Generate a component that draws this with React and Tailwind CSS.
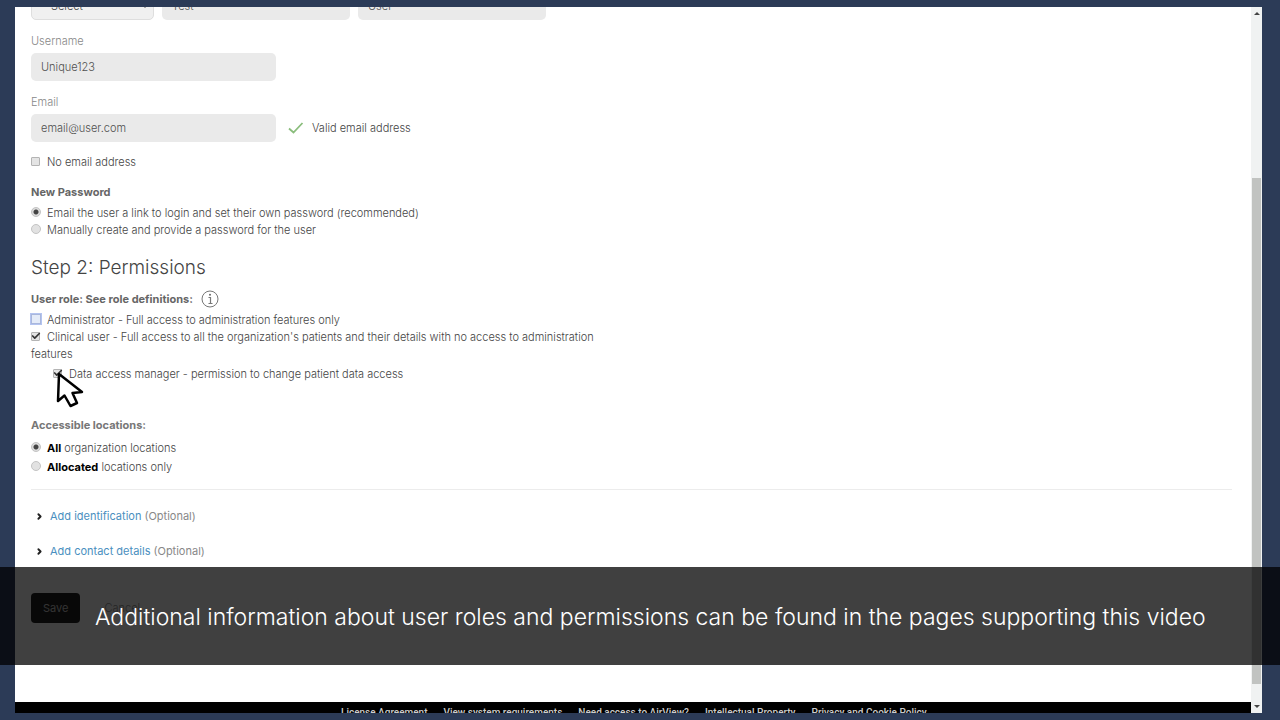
import { useState } from 'react';
import { Check, ChevronRight } from 'lucide-react';

const footerLinks = [
  'License Agreement',
  'View system requirements',
  'Need access to AirView?',
  'Intellectual Property',
  'Privacy and Cookie Policy',
];

const inputClass = 'h-7 rounded-[5px] bg-[#eaeaea] px-[10px] text-[11px] text-[#505050] outline-none';

function Tick({ focused, ...props }) {
  return (
    <span className={`relative inline-block ${focused ? 'mr-[6px] size-[10px]' : 'mr-[7px] size-[9px]'}`}>
      <input
        type="checkbox"
        className={
          focused
            ? 'block size-full appearance-none border border-[#a9b7dc] bg-[#e4ebf8] outline outline-[#b4c4f0]'
            : 'block size-full appearance-none rounded-[1px] border border-[#b4b4b4] bg-[#e4e4e4]'
        }
        {...props}
      />
      {props.checked && (
        <Check className="pointer-events-none absolute -top-px left-0 size-[10px] text-[#333]" strokeWidth={4} />
      )}
    </span>
  );
}

function Radio(props) {
  return (
    <input
      type="radio"
      className="mr-[6px] inline-block size-[10px] appearance-none rounded-full border border-[#c4c4c4] bg-[#e2e2e2] checked:bg-[radial-gradient(circle,#444_0_2px,#dcdcdc_3px)]"
      {...props}
    />
  );
}

function ExpandRow({ text }) {
  return (
    <div className="flex items-center pl-1">
      <ChevronRight className="mr-[6px] size-[9px] text-[#222]" strokeWidth={5} />
      <a href="#" className="mr-[3px] font-normal text-[#4a8fc0]">{text}</a>
      <span className="font-normal text-[#888]">(Optional)</span>
    </div>
  );
}

function Scrollbar() {
  return (
    <div className="flex w-[11px] shrink-0 flex-col items-center bg-[#f0f2f2]">
      <svg className="h-[13px] w-[6px]" viewBox="0 0 6 13"><path d="M0 8 L3 5 L6 8Z" fill="#444" /></svg>
      <div className="grow-[158]" />
      <div className="w-[9px] grow-[506] bg-[#c1c3c1]" />
      <div className="grow-[16]" />
      <svg className="h-[13px] w-[6px]" viewBox="0 0 6 13"><path d="M0 5 L3 8 L6 5Z" fill="#444" /></svg>
    </div>
  );
}

export default function App() {
  const [username, setUsername] = useState('Unique123');
  const [email, setEmail] = useState('email@user.com');
  const [noEmail, setNoEmail] = useState(false);
  const [passwordMode, setPasswordMode] = useState('link');
  const [roles, setRoles] = useState({ admin: false, clinical: true, dataAccess: true });
  const [locations, setLocations] = useState('all');

  const toggleRole = (key) => setRoles({ ...roles, [key]: !roles[key] });

  return (
    <div className="relative flex h-screen overflow-hidden bg-[#2c3b57] py-[7px] pr-[18px] pl-[15px] font-['Inter',sans-serif] text-[11px] leading-[17px] font-light text-[#444]">
      <div className="flex min-w-0 flex-1 flex-col overflow-hidden bg-white">
        <form className="-mt-[15px] flex-1 px-4" onSubmit={(e) => e.preventDefault()}>
          <div className="flex gap-2">
            <div className="relative">
              <select
                aria-label="Title"
                className="h-7 w-[123px] appearance-none rounded-[5px] border border-[#dedede] bg-[#f0f0f0] pl-[19px] outline-none"
              >
                <option>Select</option>
              </select>
              <svg className="pointer-events-none absolute top-3 right-[6px] h-1 w-[6px]" viewBox="0 0 6 4"><path d="M0 0H6L3 4Z" fill="#333" /></svg>
            </div>
            <input aria-label="First name" className={`${inputClass} w-[188px]`} defaultValue="Test" />
            <input aria-label="Last name" className={`${inputClass} w-[188px]`} defaultValue="User" />
          </div>

          <label htmlFor="username" className="mt-[13px] mb-1 block leading-4 text-[#888]">Username</label>
          <input id="username" className={`${inputClass} block w-[245px]`} value={username} onChange={(e) => setUsername(e.target.value)} />

          <label htmlFor="email" className="mt-[13px] mb-1 block leading-4 text-[#888]">Email</label>
          <div className="flex items-center">
            <input id="email" className={`${inputClass} w-[245px]`} value={email} onChange={(e) => setEmail(e.target.value)} />
            <svg className="mr-2 ml-3 h-3 w-4" viewBox="0 0 16 12" fill="none" stroke="#8abd7c" strokeWidth="1.8">
              <path d="M1 6.5 L5.5 10.5 L14.5 1" />
            </svg>
            <span>Valid email address</span>
          </div>

          <label className="mt-3 block">
            <Tick checked={noEmail} onChange={() => setNoEmail(!noEmail)} />
            No email address
          </label>

          <fieldset className="mt-[13px]">
            <legend className="mb-1 font-bold text-[#666]">New Password</legend>
            <label className="block">
              <Radio name="password" checked={passwordMode === 'link'} onChange={() => setPasswordMode('link')} />
              Email the user a link to login and set their own password (recommended)
            </label>
            <label className="block">
              <Radio name="password" checked={passwordMode === 'manual'} onChange={() => setPasswordMode('manual')} />
              Manually create and provide a password for the user
            </label>
          </fieldset>

          <h2 className="mt-[17px] text-[19px] leading-6">Step 2: Permissions</h2>

          <div className="mt-[10px] mb-1 flex items-center gap-2">
            <span className="font-bold text-[#666]">User role: See role definitions:</span>
            <button type="button" aria-label="Role definitions">
              <svg className="block size-[18px]" viewBox="0 0 18 18" fill="none" stroke="#777">
                <circle cx="9" cy="9" r="8" />
                <path d="M7.5 7.5H9.5V13M7.5 13.5H11.5" strokeWidth="1.2" />
                <circle cx="9" cy="4.8" r="1" fill="#666" stroke="none" />
              </svg>
            </button>
          </div>
          <div className="max-w-[580px]">
            <label className="block">
              <Tick focused checked={roles.admin} onChange={() => toggleRole('admin')} />
              Administrator - Full access to administration features only
            </label>
            <label className="block">
              <Tick checked={roles.clinical} onChange={() => toggleRole('clinical')} />
              Clinical user - Full access to all the organization's patients and their details with no access to administration features
            </label>
            <div className="relative mt-[3px] pl-[22px]">
              <label className="block">
                <Tick checked={roles.dataAccess} onChange={() => toggleRole('dataAccess')} />
                Data access manager - permission to change patient data access
              </label>
              <svg className="pointer-events-none absolute top-[6px] left-[25px] h-9 w-7" viewBox="0 0 28 36">
                <path d="M3 2 L2 29 L8.5 23.5 L14.5 34 L21 31 L16.5 21 L26 20Z" fill="#fff" stroke="#000" strokeWidth="2.5" strokeLinejoin="round" />
              </svg>
            </div>
          </div>

          <fieldset className="mt-[34px]">
            <legend className="mb-[6px] font-bold text-[#777]">Accessible locations:</legend>
            <label className="mb-[2px] block">
              <Radio name="locations" checked={locations === 'all'} onChange={() => setLocations('all')} />
              <b className="font-bold text-black">All</b> organization locations
            </label>
            <label className="block">
              <Radio name="locations" checked={locations === 'allocated'} onChange={() => setLocations('allocated')} />
              <b className="font-bold text-black">Allocated</b> locations only
            </label>
          </fieldset>

          <hr className="mt-[13px] mr-[3px] border-[#ececec]" />

          <div className="mt-[18px] flex flex-col gap-[18px]">
            <ExpandRow text="Add identification" />
            <ExpandRow text="Add contact details" />
          </div>

          <div className="mt-[33px] flex items-center gap-6">
            <button type="submit" className="h-[30px] rounded-[4px] bg-[#222] px-3 font-normal text-[#ccc]">Save</button>
            <button type="button" className="text-[#999]">Cancel</button>
          </div>
        </form>

        <footer className="flex h-[11px] shrink-0 gap-4 bg-black pt-[3px] pl-[326px] font-['Roboto',sans-serif] text-[10px] leading-4 font-medium whitespace-nowrap text-[#ccc]">
          {footerLinks.map((link) => (
            <a key={link} href="#">{link}</a>
          ))}
        </footer>
      </div>

      <Scrollbar />

      <div className="absolute inset-x-0 bottom-[55px] flex h-[98px] items-center bg-black/75 pt-[2px] pl-[95px] text-[23px] leading-8 whitespace-nowrap text-white">
        Additional information about user roles and permissions can be found in the pages supporting this video
      </div>
    </div>
  );
}
